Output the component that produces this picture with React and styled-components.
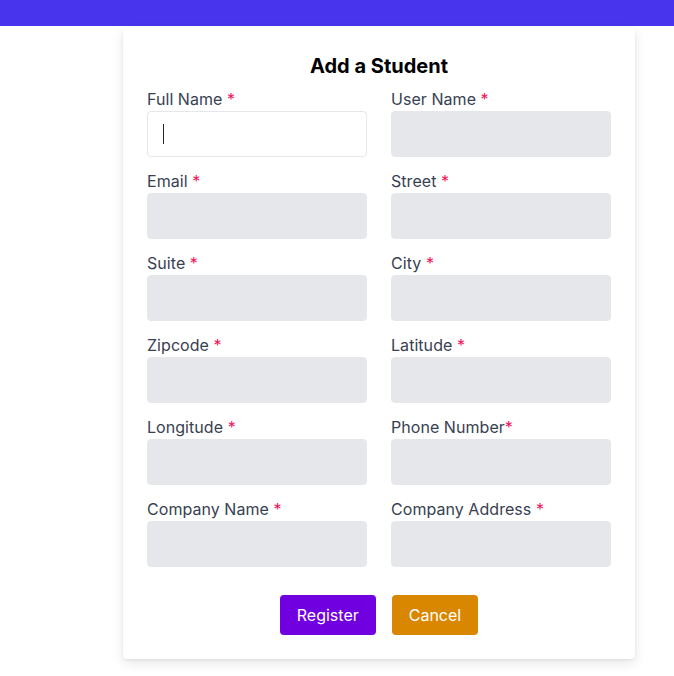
import React from "react";
import styled, { createGlobalStyle } from "styled-components";

const GlobalStyle = createGlobalStyle`
  body {
    margin: 0;
    background: #ffffff;
    font-family: Inter, "Noto Sans", Arial, sans-serif;
  }
  * { box-sizing: border-box; }
`;

const TopBar = styled.header`
  height: 26px;
  background: #4834ec;
`;

const Page = styled.main`
  padding: 2px 0 20px 123px;
`;

const Card = styled.form`
  width: 512px;
  background: #ffffff;
  padding: 24px 24px 24px;
  box-shadow: 0 4px 12px rgba(0, 0, 0, 0.1), 0 1px 3px rgba(0, 0, 0, 0.06);
  border-radius: 4px;
`;

const Title = styled.h2`
  margin: 0 0 7px;
  text-align: center;
  font-size: 20px;
  line-height: 28px;
  font-weight: 700;
  color: #000000;
`;

const Grid = styled.div`
  display: grid;
  grid-template-columns: 1fr 1fr;
  column-gap: 24px;
  row-gap: 12px;
`;

const Field = styled.div`
  display: flex;
  flex-direction: column;
`;

const Label = styled.label`
  font-size: 16px;
  line-height: 24px;
  font-weight: 400;
  letter-spacing: 0.05px;
  color: #374151;
`;

const Star = styled.span`
  color: #f0145a;
`;

const InputWrap = styled.div`
  position: relative;
`;

const Input = styled.input`
  display: block;
  width: 100%;
  height: 46px;
  padding: 0 16px;
  border-radius: 4px;
  font-size: 16px;
  font-family: inherit;
  outline: none;
  border: 1px solid #e5e7eb;
  background: ${({ $active }) => ($active ? "#ffffff" : "#e5e7eb")};
  caret-color: transparent;
`;

const Caret = styled.span`
  position: absolute;
  left: 16px;
  top: 13px;
  width: 1px;
  height: 20px;
  background: #1f2937;
`;

const Actions = styled.div`
  display: flex;
  justify-content: center;
  gap: 16px;
  margin-top: 28px;
`;

const Button = styled.button`
  height: 40px;
  padding: 0 17px;
  border: none;
  border-radius: 4px;
  color: #ffffff;
  font-family: inherit;
  font-size: 16px;
  font-weight: 400;
  background: ${({ $tone }) => ($tone === "cancel" ? "#d98600" : "#7000e0")};
  cursor: pointer;
`;

const fields = [
  ["Full Name", " "],
  ["User Name", " "],
  ["Email", " "],
  ["Street", " "],
  ["Suite", " "],
  ["City", " "],
  ["Zipcode", " "],
  ["Latitude", " "],
  ["Longitude", " "],
  ["Phone Number", ""],
  ["Company Name", " "],
  ["Company Address", " "],
];

export default function App() {
  return (
    <>
      <GlobalStyle />
      <TopBar />
      <Page>
        <Card onSubmit={(e) => e.preventDefault()}>
          <Title>Add a Student</Title>
          <Grid>
            {fields.map(([name, sep], i) => (
              <Field key={name}>
                <Label>
                  {name}
                  {sep}
                  <Star>*</Star>
                </Label>
                <InputWrap>
                  <Input type="text" $active={i === 0} />
                  {i === 0 && <Caret />}
                </InputWrap>
              </Field>
            ))}
          </Grid>
          <Actions>
            <Button type="submit">Register</Button>
            <Button type="button" $tone="cancel">Cancel</Button>
          </Actions>
        </Card>
      </Page>
    </>
  );
}
